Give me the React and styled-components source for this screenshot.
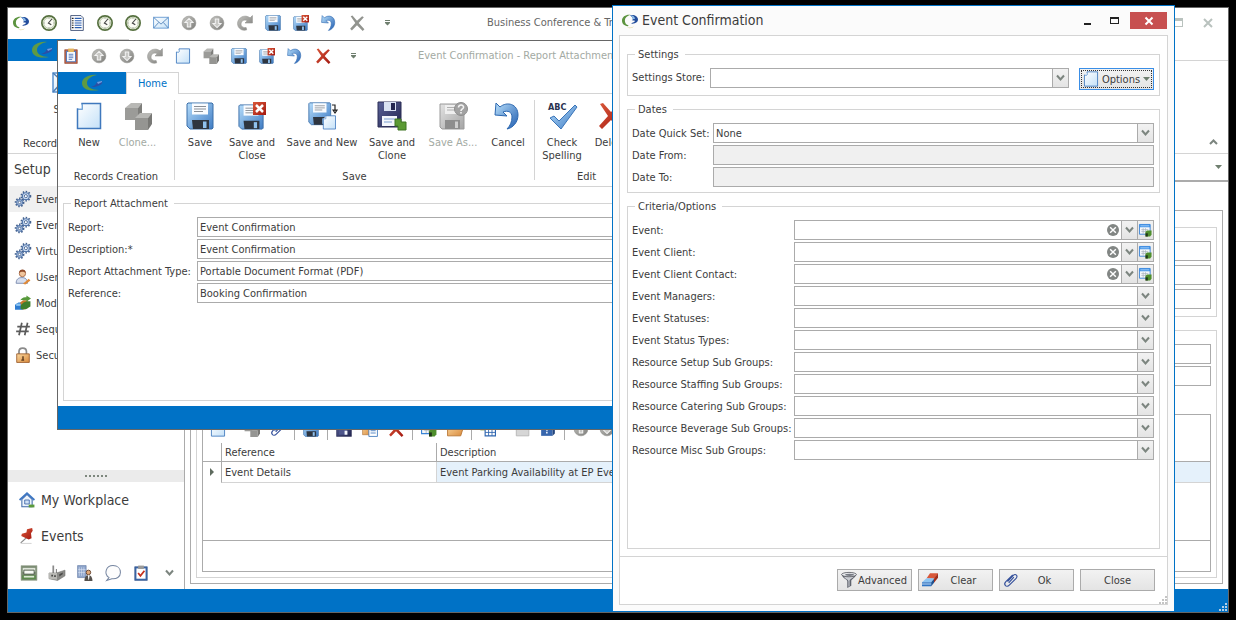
import React, { useId } from 'react';
import styled, { createGlobalStyle } from 'styled-components';

const blue = '#0072c6';
const line = '#d4d4d4';
const darkLine = '#ababab';

const GlobalStyle = createGlobalStyle`
  * {
    box-sizing: border-box;
  }

  body {
    margin: 0;
    background: #000;
    color: #3c3c3c;
    font-family: Tahoma, 'DejaVu Sans Condensed', 'Noto Sans', sans-serif;
    font-size: 11px;
    line-height: 13px;
  }

  button, input, select {
    font: inherit;
    color: inherit;
    margin: 0;
  }

  button {
    background: none;
    border: none;
    padding: 0;
  }

  svg {
    flex: none;
    overflow: visible;
  }
`;

/* ---------- windows ---------- */

const Desktop = styled.div`
  position: relative;
  min-height: 100vh;
  overflow: hidden;
`;

const Window = styled.section`
  position: absolute;
  display: flex;
  flex-direction: column;
  overflow: hidden;
  background: #fff;
  border: 1px solid #666;
`;

const MainWindow = styled(Window)`
  inset: 7px;
`;

const ReportWindow = styled(Window)`
  inset: 40px 200px 190px 57px;
`;

const DialogWindow = styled(Window)`
  inset: 5px 61px 8px 612px;
  background: #fbfbfb;
  border-color: ${blue};
  padding: 0 6px 6px;
`;

const TitleBar = styled.header`
  flex: none;
  display: flex;
  align-items: center;
  gap: 12px;
  height: 31px;
  padding: 0 11px 2px 5px;
  white-space: nowrap;
`;

const ToolButton = styled.button`
  flex: none;
  display: flex;
  align-items: center;
  justify-content: center;
  width: 16px;
  height: 16px;
`;

const MoreButton = styled(ToolButton)`
  width: 20px;
`;

const BarTitle = styled.h1`
  flex: 1;
  margin: 0;
  padding-left: ${(p) => p.$indent}px;
  overflow: hidden;
  color: ${(p) => (p.$inactive ? '#a3aaa3' : '#666')};
  font-size: 11px;
  font-weight: normal;
`;

const StatusBar = styled.footer`
  flex: none;
  display: flex;
  align-items: flex-end;
  justify-content: flex-end;
  height: 23px;
  padding: 1px;
  background: ${blue};
`;

/* ---------- ribbon ---------- */

const TabRow = styled.nav`
  flex: none;
  display: flex;
  height: 22px;
  border-bottom: 1px solid ${line};
`;

const AppButton = styled.button`
  display: flex;
  align-items: center;
  justify-content: center;
  width: 68px;
  height: 22px;
  background: ${blue};
`;

const Tab = styled.button`
  width: 53px;
  height: 22px;
  background: #fff;
  border: 1px solid ${line};
  border-bottom: none;
  color: ${blue};
`;

const Ribbon = styled.div`
  flex: none;
  display: flex;
  height: 93px;
  padding: 6px 0 3px;
  border-bottom: 1px solid ${line};
`;

const RibbonGroup = styled.div`
  display: flex;
  flex-direction: column;
  justify-content: space-between;
  padding: 0 ${(p) => p.$pad || 3}px;
  text-align: ${(p) => (p.$left ? 'left' : 'center')};
`;

const RibbonSeparator = styled.span`
  width: 1px;
  height: 80px;
  background: ${line};
`;

const RibbonItems = styled.div`
  display: flex;
  gap: 1px;
`;

const RibbonButton = styled.button`
  display: flex;
  flex-direction: column;
  align-items: center;
  gap: 6px;
  width: ${(p) => p.$width}px;
  padding: 2px 4px 0;
  white-space: ${(p) => (p.$wide ? 'nowrap' : 'normal')};

  &:disabled {
    color: #a3aaa3;
  }
`;

const RibbonSpacer = styled.div`
  flex: 1;
  display: flex;
  align-items: flex-end;
  justify-content: flex-end;
  padding-right: 7px;
`;

/* ---------- form parts ---------- */

const Group = styled.fieldset`
  min-width: 0;
  margin: 0;
  padding: 6px 5px 5px 4px;
  border: 1px solid ${line};
  flex: ${(p) => (p.$grow ? 1 : 'none')};

  legend {
    margin-left: 3px;
    padding: 0 6px 0 3px;
    line-height: 15px;
  }
`;

const Fields = styled.div`
  display: grid;
  grid-template-columns: ${(p) => p.$label}px 1fr;
  gap: 2px 0;
  align-items: center;
`;

const FieldLabel = styled.label`
  white-space: nowrap;
`;

const TextBox = styled.input`
  width: 100%;
  height: 20px;
  padding: 0 2px;
  background: #fff;
  border: 1px solid ${darkLine};
  border-radius: 0;
  outline: none;

  &:disabled {
    background: #f0f0f0;
  }
`;

const SelectWrap = styled.div`
  position: relative;
  height: 20px;

  select {
    display: block;
    width: 100%;
    height: 20px;
    padding: 0 18px 0 2px;
    appearance: none;
    background: #fff;
    border: 1px solid ${darkLine};
    border-radius: 0;
  }
`;

const SelectArrow = styled.span`
  position: absolute;
  top: 0;
  right: 0;
  display: flex;
  align-items: center;
  justify-content: center;
  width: 17px;
  height: 20px;
  background: linear-gradient(#f2f2f2, #e4e4e4);
  border: 1px solid ${darkLine};
  pointer-events: none;
`;

const LookupBox = styled.div`
  display: flex;
  align-items: center;
  height: 20px;
  background: #fff;
  border: 1px solid ${darkLine};

  input {
    flex: 1;
    min-width: 0;
    height: 18px;
    padding: 0 2px;
    border: none;
    background: none;
  }
`;

const LookupButton = styled.button`
  display: flex;
  align-items: center;
  justify-content: center;
  width: 16px;
  height: 18px;
  background: linear-gradient(#f2f2f2, #e4e4e4);
  border-left: 1px solid ${darkLine};
`;

const ClearButton = styled(ToolButton)`
  width: 17px;
`;

const PushButton = styled.button`
  display: flex;
  align-items: center;
  width: 75px;
  height: 22px;
  padding: 0 3px;
  background: linear-gradient(#f2f2f2, #e4e4e4);
  border: 1px solid ${darkLine};

  span {
    flex: 1;
    text-align: center;
  }
`;

const OptionsButton = styled(PushButton)`
  border-color: #3a8ee6;
  outline: 1px dotted #333;
  outline-offset: -3px;
`;

/* ---------- dialog ---------- */

const DialogBar = styled.header`
  flex: none;
  display: flex;
  align-items: center;
  gap: 4px;
  height: 29px;
  padding: 0 1px 0 3px;

  h2 {
    flex: 1;
    margin: 0;
    font-size: 14px;
    font-weight: normal;
  }
`;

const CaptionButton = styled.button`
  display: flex;
  align-items: center;
  justify-content: center;
  width: ${(p) => p.$width}px;
  height: 17px;
  background: ${(p) => (p.$close ? '#c75050' : 'none')};
`;

const DialogBody = styled.div`
  flex: 1;
  display: flex;
  flex-direction: column;
  background: #fff;
  border: 1px solid ${line};
`;

const DialogForm = styled.form`
  flex: 1;
  display: flex;
  flex-direction: column;
  gap: 6px;
  padding: 11px 7px 7px;
`;

const StoreRow = styled.div`
  display: grid;
  grid-template-columns: 78px 1fr 75px;
  align-items: start;
  height: 22px;

  label {
    line-height: 20px;
  }
`;

const StoreSelect = styled.div`
  padding-right: 10px;
`;

const DialogFooter = styled.footer`
  display: flex;
  justify-content: flex-end;
  gap: 6px;
  padding: 12px 12px 5px;
  border-top: 1px solid ${line};
`;

const GripRow = styled.div`
  display: flex;
  justify-content: flex-end;
`;

/* ---------- main window ---------- */

const MainBody = styled.div`
  flex: 1;
  display: flex;
  min-height: 0;
`;

const Sidebar = styled.aside`
  flex: none;
  display: flex;
  flex-direction: column;
  width: 177px;
  border-right: 1px solid ${darkLine};

  h2 {
    margin: 0;
    padding-left: 6px;
    font-size: 14px;
    font-weight: normal;
    line-height: 31px;
    height: 32px;
  }
`;

const NavList = styled.div`
  flex: 1;
  padding: 0 1px;
`;

const NavItem = styled.button`
  display: flex;
  align-items: center;
  gap: 5px;
  width: 100%;
  height: 26px;
  padding-left: 6px;
  background: ${(p) => (p.$active ? '#f0f0f0' : 'none')};
`;

const Splitter = styled.div`
  display: flex;
  align-items: center;
  justify-content: center;
  gap: 2px;
  height: 12px;
  background: #ebebeb;

  i {
    width: 2px;
    height: 2px;
    background: #7d877d;
  }
`;

const BigNavItem = styled.button`
  display: flex;
  align-items: center;
  gap: 6px;
  height: 36px;
  padding-left: 11px;
  font-size: 14px;
`;

const NavIcons = styled.div`
  display: flex;
  align-items: center;
  gap: 12px;
  height: 35px;
  padding: 3px 0 0 13px;
`;

const Content = styled.main`
  flex: 1;
  display: flex;
  flex-direction: column;
  min-width: 0;
`;

const DocTabs = styled.div`
  display: flex;
  align-items: center;
  justify-content: flex-end;
  height: 28px;
  padding: 0 6px 1px 0;
  border-bottom: 2px solid ${darkLine};
`;

const Record = styled.div`
  flex: 1;
  display: flex;
  flex-direction: column;
  margin: 28px 5px 5px;
  padding: 16px 5px 5px;
  border: 1px solid ${darkLine};
`;

const Panel = styled.div`
  display: flex;
  flex-direction: column;
  flex: ${(p) => (p.$grow ? 1 : 'none')};
  gap: ${(p) => p.$gap}px;
  padding: 13px 5px ${(p) => (p.$grow ? 5 : 7)}px;
  border: 1px solid ${line};

  & + & {
    margin-top: 13px;
  }
`;

const Grid = styled.div`
  flex: 1;
  display: flex;
  flex-direction: column;
  margin-top: 26px;
  border: 1px solid ${darkLine};
`;

const GridTools = styled.div`
  display: flex;
  align-items: center;
  gap: 10px;
  height: 28px;
  padding-left: 7px;
`;

const SplitButton = styled(ToolButton)`
  justify-content: flex-start;
  width: 24px;
`;

const GridSeparator = styled.span`
  width: 1px;
  height: 22px;
  margin: 0 -2px;
  background: ${darkLine};
`;

const Table = styled.table`
  width: 100%;
  table-layout: fixed;
  border-collapse: separate;
  border-spacing: 0;

  th, td {
    height: 21px;
    padding: 0 3px;
    border-bottom: 1px solid ${line};
    border-left: 1px solid ${line};
    font-weight: normal;
    text-align: left;
    white-space: nowrap;
    overflow: hidden;
  }

  th {
    height: 19px;
    border-color: ${darkLine};
  }

  th:first-child, td:first-child {
    width: 18px;
    border-left: none;
    padding: 0 0 0 7px;
  }

  td:first-child {
    border-bottom: none;
  }

  td:nth-child(2) {
    border-left-color: ${darkLine};
  }

  th:nth-child(2) {
    width: 215px;
  }

  td:nth-child(3) {
    background: #e5f1fb;
  }
`;

const GridBlank = styled.div`
  flex: 1;
  border-bottom: 1px solid ${darkLine};
`;

const GridFooter = styled.div`
  height: 30px;
`;

/* ---------- icons ---------- */

const HiddenSvg = styled.svg`
  position: absolute;
  width: 0;
  height: 0;
`;

function Gradient({ id, from, to }) {
  return (
    <linearGradient id={id} x1="0" y1="0" x2="1" y2="1">
      <stop offset="0" stopColor={from} />
      <stop offset="1" stopColor={to} />
    </linearGradient>
  );
}

function IconDefs() {
  return (
    <HiddenSvg aria-hidden="true">
      <defs>
        <Gradient id="gDisk" from="#b5dcfa" to="#3f7cc4" />
        <Gradient id="gNavy" from="#5a6299" to="#23264f" />
        <Gradient id="gPage" from="#ffffff" to="#c4e1f8" />
        <Gradient id="gRed" from="#d9583a" to="#a3170f" />
        <Gradient id="gGray" from="#c4c4c0" to="#7d7d7a" />
        <Gradient id="gUndo" from="#b9e0fb" to="#1f5cb0" />
        <Gradient id="gGold" from="#fbd9a0" to="#d98a3d" />
        <Gradient id="gSilver" from="#e2e2e2" to="#a5a5a5" />
      </defs>
    </HiddenSvg>
  );
}

const disk = (
  <>
    <path d="M2 1h24l1 1v24l-1 1H4l-3-3V2z" fill="url(#gDisk)" stroke="#3a6ea8" />
    <path d="M6 1.500h16v11H6z" fill="#fafcff" />
    <path d="M8 4.500h12M8 7h12M8 9.500h9" stroke="#8a8f96" />
    <path d="M6 18h17v9H7z" fill="#2e3540" />
    <path d="M17 19.500h3.500V26H17z" fill="#8fc1ee" />
  </>
);

const page = (
  <>
    <path d="M7 1.500h18.500v25h-23V7H7z" fill="url(#gPage)" stroke="#3f78bd" strokeWidth="1.500" />
    <path d="M7 2v5H3" fill="#fff" stroke="#7fb0e0" />
  </>
);

const cubes = (
  <>
    <path d="M1 6l6-5h11l-4 5z" fill="#b8b8b5" />
    <path d="M1 6h13v12H1z" fill="#9b9b98" />
    <path d="M14 6l4-5v10l-4 6z" fill="#7e7e7b" />
    <path d="M11 16l5-5h12l-4 5z" fill="#b8b8b5" />
    <path d="M11 16h13v12H11z" fill="#959592" />
    <path d="M24 16l4-5v11l-4 6z" fill="#787875" />
  </>
);

const undo = (
  <path
    d="M2 1L1 13l12 1-4-4c5-2 9 0 9 5 0 5-2 9-5 12 6-1 11-7 11-14C24 2 13-1 6 5z"
    fill="url(#gUndo)"
    stroke="#2d68b0"
  />
);

const roundArrow = (d) => (
  <>
    <circle cx="14" cy="14" r="12" fill="url(#gGray)" stroke="#8b8b88" />
    <path d={d} fill="#c9c9c6" stroke="#f4f4f4" strokeWidth="1.800" />
  </>
);

const clock = (
  <>
    <circle cx="14" cy="14" r="12.500" fill="#fbfcf5" stroke="#56703f" strokeWidth="3" />
    <circle cx="14" cy="14" r="9.500" fill="none" stroke="#a9ba94" strokeWidth="1.500" />
    <path d="M19 7l-6 7 5 3" fill="none" stroke="#444" strokeWidth="2" />
    <path d="M14 5v2M14 21v2M5 14h2M21 14h2" stroke="#888" />
  </>
);

const clip = (
  <path
    d="M8 17L18 6c4-4 9 1 5 5L11 23c-5 5-11-1-6-6L17 5M10 19l9-10"
    fill="none"
    stroke="#34509b"
    strokeWidth="2"
  />
);

const gear = (cx, cy, r) => (
  <>
    <circle cx={cx} cy={cy} r={r + 2} fill="none" stroke="#43618f" strokeWidth="3" strokeDasharray="2.600 2.600" />
    <circle cx={cx} cy={cy} r={r} fill="#cfdff5" stroke="#5578ab" strokeWidth="2" />
    <circle cx={cx} cy={cy} r={r / 2.2} fill="#fff" stroke="#43618f" strokeWidth="1.500" />
  </>
);

const cross = 'M3 2l3-1 8 9 9-8 3 2-9 10 10 11-3 3-10-10L5 27l-3-3 9-10z';

const icons = {
  disk,
  page,
  cubes,
  undo,
  clock,
  clip,
  logo: (
    <>
      <path d="M15 3C7 2 0 6 0 13c0 6 4 9 10 10 2 0 2-1 0-2-3-1-5-4-5-8 0-5 4-8 10-10z" fill="#5d9440" />
      <path d="M14 4c7-2 14 2 14 7 0 6-6 8-12 8l2-2c4-1 5-2 4-4h-4l1-3c-1-3-3-4-5-6z" fill="#234d9c" />
      <path d="M14 4c5 0 8 2 9 6l-4 1c0-3-2-5-5-7z" fill="#8fbde8" />
      <path d="M9 25c5 1 9 0 12-2-2 3-8 5-12 2z" fill="#e3d9a0" />
    </>
  ),
  report: (
    <>
      <path d="M3 1h18l4 4v22H3z" fill="#fff" stroke="#33466e" strokeWidth="1.500" />
      <path d="M10 6h12M10 10h12M10 14h12M10 18h12M10 22h12" stroke="#2a5db0" strokeWidth="2" />
      <path d="M5 6h3M5 10h3M5 14h3M5 18h3M5 22h3" stroke="#222" strokeWidth="2" />
    </>
  ),
  mail: (
    <>
      <path d="M1 4h26v19H1z" fill="url(#gPage)" stroke="#5b93cf" strokeWidth="1.500" />
      <path d="M1 4l13 12L27 4M1 23l9-10M27 23l-9-10" fill="none" stroke="#4d7fb8" strokeWidth="1.500" />
    </>
  ),
  up: roundArrow('M14 6l7 7h-4v8h-6v-8H7z'),
  down: roundArrow('M14 22l7-7h-4V7h-6v8H7z'),
  refresh: (
    <path
      d="M27 1v13H14l4-4c-5-3-11 0-11 6 0 4 4 7 9 6l1 4C9 29 1 23 1 15 1 4 14-2 23 5z"
      fill="url(#gGray)"
      stroke="#90908d"
    />
  ),
  diskClose: (
    <>
      <g transform="translate(0 2) scale(.93)">{disk}</g>
      <path d="M15 0h13v13H15z" fill="url(#gRed)" />
      <path d="M18 3l7 7M25 3l-7 7" stroke="#fff" strokeWidth="2.500" />
    </>
  ),
  diskNew: (
    <>
      <g transform="scale(.84)">{disk}</g>
      <g transform="translate(14 13) scale(.53)">{page}</g>
      <path d="M24 3h3v6M25 8l2 3 2-3z" fill="none" stroke="#222" strokeWidth="1.200" />
    </>
  ),
  diskNavy: (
    <>
      <path d="M1 1h26v26H1z" fill="url(#gNavy)" stroke="#2a2c55" />
      <path d="M8 1h12v9H8z" fill="#d9e2f2" />
      <path d="M15 2h4v7h-4z" fill="#23264f" />
      <path d="M5 14h14v10H5z" fill="#4e568c" />
      <path d="M15 17h5v7h-5z" fill="#f4f7fc" />
    </>
  ),
  diskClone: (
    <>
      <path d="M0 0h23v25H0z" fill="url(#gNavy)" stroke="#2a2c55" />
      <path d="M6 0h12v9H6z" fill="#d9e2f2" />
      <path d="M13 1h4v7h-4z" fill="#23264f" />
      <path d="M4 14h15v10H4z" fill="#f4f7fc" />
      <path d="M6 17h11M6 20h8" stroke="#7a9fd0" />
      <path d="M17 17h6v3h5v8h-8v-4h-3z" fill="#5b9a34" stroke="#3f7523" />
    </>
  ),
  diskAs: (
    <>
      <path d="M1 2h24v25H3l-2-2z" fill="url(#gSilver)" stroke="#9b9b9b" />
      <path d="M6 3h14v9H6z" fill="#efefef" />
      <path d="M8 5.500h10M8 8h10" stroke="#b0b0b0" />
      <path d="M6 18h15v9H6z" fill="#8e8e8e" />
      <path d="M16 19.500h3V26h-3z" fill="#cfcfcf" />
      <circle cx="22" cy="7" r="6.500" fill="#a2a2a2" stroke="#8d8d8d" />
      <path d="M19.500 5.500c0-3.500 5.500-3 5 0-.2 1.500-2.500 1.500-2.500 3.500M22 10v1.500" fill="none" stroke="#f4f4f4" strokeWidth="1.600" />
    </>
  ),
  spell: (
    <>
      <text x="0" y="8" fontSize="9" fontWeight="bold" fill="#2b3350">ABC</text>
      <path d="M2 16l4-2 5 5L27 3l2 2-16 22z" fill="url(#gDisk)" stroke="#3a74b8" />
    </>
  ),
  crossRed: <path d={cross} fill="url(#gRed)" />,
  crossGray: <path d={cross} fill="#92948f" />,
  clipboard: (
    <>
      <path d="M3 3h22v24H3z" fill="#c4633f" stroke="#8c3a26" />
      <path d="M6 6h16v18H6z" fill="#f6f9ff" stroke="#5a7cb8" strokeWidth="2" />
      <path d="M9 1h10v6H9z" fill="#e6b45a" />
      <path d="M10 11h8M10 14h8M10 17h8M10 20h6" stroke="#4b74ba" strokeWidth="1.500" />
    </>
  ),
  gears: (
    <>
      {gear(19, 9, 6)}
      {gear(8, 20, 5)}
    </>
  ),
  user: (
    <>
      <circle cx="13" cy="8" r="5.500" fill="#f0c59c" stroke="#a4623c" strokeWidth="1.500" />
      <path d="M7 7c0-8 12-8 12 0-3-3-9-3-12 0z" fill="#8f4a2a" />
      <path d="M2 25c0-7 4-10 10-10s10 3 10 10z" fill="#d6deee" stroke="#7183a8" strokeWidth="1.500" />
      <path d="M14 26l10-9 3 3-9 7z" fill="#e08a38" />
    </>
  ),
  modules: (
    <>
      <path d="M0 17l6-4h8v13H0z" fill="#2f7cd0" />
      <path d="M2 15h8v4H2z" fill="#8cc4f2" />
      <path d="M9 13l5-4h8v14l-8 3z" fill="#c87a2c" />
      <path d="M15 13l6-2h6v9l-8 5h-9v-7z" fill="#3f7f2c" />
      <path d="M9 9c4-5 8-5 11-5V1l8 5-8 6V9c-4 0-7-1-11 0z" fill="#579a3b" />
    </>
  ),
  hash: <path d="M12 3L7 25M22 3l-5 22M4 10h22M2 18h22" stroke="#5b5b5b" strokeWidth="3" />,
  lock: (
    <>
      <path d="M7 13V8c0-8 13-8 13 0v5" fill="none" stroke="#8a8a8a" strokeWidth="3" />
      <path d="M3 12h22v15H3z" fill="url(#gGold)" stroke="#9a5a28" strokeWidth="1.500" />
      <path d="M14 16v7M11 23h5" stroke="#5c3a1c" strokeWidth="2.500" />
    </>
  ),
  house: (
    <>
      <path d="M5 13l9-9 9 9v13H5z" fill="#eef4fc" stroke="#3f68a8" strokeWidth="1.800" />
      <path d="M1 14L14 2l13 12" fill="none" stroke="#3f78c4" strokeWidth="3" />
      <path d="M10 14h8v7h-8z" fill="#cfe0f5" stroke="#3f68a8" strokeWidth="1.500" />
      <path d="M17 22h10v5H17z" fill="#5b9a3c" />
    </>
  ),
  pin: (
    <>
      <path d="M13 17L3 26" stroke="#888" strokeWidth="2" />
      <path d="M14 2l9-2 1 5-3 4 1 9-5 2-13-6 1-4 8-2z" fill="url(#gRed)" />
      <path d="M3 27h19" stroke="#ccc" strokeWidth="1.500" />
    </>
  ),
  rack: (
    <>
      <path d="M0 1h28v26H0z" fill="#7c8c74" stroke="#a5b09e" />
      <path d="M3 5h22v7H3z" fill="#dfe5da" />
      <path d="M5 9h18v7H5z" fill="#f7f9f5" stroke="#44513f" strokeWidth="1.500" />
      <path d="M2 18h24v7H2z" fill="#5c8a4c" />
      <path d="M5 19h18v3H5z" fill="#dbe9d4" />
    </>
  ),
  factory: (
    <>
      <path d="M6 1h3v13H6zM12 7h2v8h-2z" fill="#8a8a8a" />
      <path d="M0 14h13l15-5v10l-13 8L0 24z" fill="#8b8b88" stroke="#6d6d6a" />
      <path d="M0 14h14v12L0 24z" fill="#b9b9b5" />
      <path d="M4 17h3v3H4zM9 18h3v3H9zM18 16l6-3v3l-6 4z" fill="#4a4a48" />
    </>
  ),
  building: (
    <>
      <path d="M1 1h15v21H1z" fill="#8fa5cc" stroke="#5a719f" />
      <path d="M4 4v15M8 4v15M12 4v15M2 8h13M2 13h13" stroke="#dde6f5" />
      <circle cx="20" cy="13" r="4" fill="#e2a878" stroke="#5b3823" strokeWidth="1.500" />
      <path d="M13 28c0-7 3-10 7-10s7 3 7 10z" fill="#55514d" />
      <path d="M19 18h3l-1 8h-1z" fill="#fff" />
    </>
  ),
  bubble: (
    <path d="M14 1c8 0 13 5 13 12 0 8-7 12-15 11l-9 3 4-5C-3 15 2 1 14 1z" fill="#fdfdfd" stroke="#7585a0" strokeWidth="1.800" />
  ),
  checklist: (
    <>
      <path d="M3 3h22v24H3z" fill="#3c67a8" stroke="#2c4f86" />
      <path d="M6 6h16v18H6z" fill="#fff" />
      <path d="M9 1h10v6H9z" fill="#9a9a9a" />
      <path d="M9 14l4 5 7-9" fill="none" stroke="#c5311d" strokeWidth="3" />
    </>
  ),
  copyPage: (
    <>
      <path d="M1 4h15v20H1z" fill="url(#gGold)" stroke="#a8692c" />
      <path d="M12 8h15v19H12z" fill="#fff" stroke="#3f78bd" strokeWidth="1.500" />
      <path d="M15 13h9M15 17h9M15 21h9" stroke="#3f78bd" strokeWidth="1.500" />
    </>
  ),
  lookup: (
    <>
      <path d="M1 1h23v21H1z" fill="#f4f7fb" stroke="#3a84d6" strokeWidth="2" />
      <path d="M1 1h23v6H1z" fill="#3a8fe6" />
      <path d="M3 3h19v2H3z" fill="#a9d2fa" />
      <path d="M5 12h15M5 16h12M9 9v12M14 9v12" stroke="#a9b3bd" strokeWidth="1.500" />
      <path d="M14 17l3-3h10v9l-3 4H14z" fill="#4f8f2d" />
      <path d="M14 20h5v7h-5z" fill="#22361a" />
    </>
  ),
  folder: <path d="M1 6h9l3 3h11v4h4l-4 13H1z" fill="url(#gGold)" stroke="#b5702c" strokeWidth="1.500" />,
  gridBlue: (
    <>
      <path d="M1 4h12v12H1z" fill="#e9f0cf" stroke="#8a9a55" />
      <path d="M9 8h18v18H9z" fill="#fff" stroke="#2f66b0" strokeWidth="2" />
      <path d="M9 14h18M9 20h18M15 8v18M21 8v18" stroke="#2f66b0" strokeWidth="1.500" />
    </>
  ),
  blank: <path d="M4 6h22v20H4z" fill="#d6d6d6" stroke="#b4b4b4" strokeWidth="1.500" />,
  help: (
    <>
      <path d="M2 5h20v21H2z" fill="#3766ad" />
      <path d="M22 5l4-3v20l-4 4z" fill="#24467d" />
      <path d="M8 11c1-4 8-3 7 1-1 2-3 2-3 5M12 19v3" fill="none" stroke="#fff" strokeWidth="2.500" />
    </>
  ),
  clear: (
    <>
      <circle cx="14" cy="14" r="10.500" fill="#828684" />
      <path d="M9 9l10 10M19 9L9 19" stroke="#fff" strokeWidth="2.500" />
    </>
  ),
  funnel: (
    <>
      <path d="M1 4c3 9 9 8 10 12v12l7-4v-8c0-4 6-4 9-12z" fill="#5e626c" />
      <path d="M5 8c3 5 7 5 8 8v10l2-1v-9c0-4 5-4 8-8z" fill="#c9ccd2" />
      <ellipse cx="14" cy="4.500" rx="13" ry="3.800" fill="#e9ebee" stroke="#5c5f66" strokeWidth="1.500" />
      <ellipse cx="15" cy="5" rx="8" ry="2" fill="#777b84" />
    </>
  ),
  eraser: (
    <>
      <path d="M8 11l6-9h14l-6 10z" fill="#d9583a" />
      <path d="M21 12l7-10v8l-7 9z" fill="#9e2f1c" />
      <path d="M0 18l8-7h13l-5 7z" fill="#8cc4f2" />
      <path d="M0 18h16v7H0z" fill="#2f74c4" />
      <path d="M16 18l5-6v7l-5 6z" fill="#1f5292" />
      <path d="M0 21h16" stroke="#dbeaf9" strokeWidth="1.500" />
    </>
  ),
};

function Icon({ name, size = 16 }) {
  return (
    <svg width={size} height={size} viewBox="0 0 28 28" aria-hidden="true">
      {icons[name]}
    </svg>
  );
}

const Chevron = ({ up }) => (
  <svg width="9" height="8" viewBox="0 0 9 8" aria-hidden="true">
    <path d={up ? 'M1 6l3.500-3.500L8 6' : 'M1 1.500L4.500 5.500 8 1.500'} fill="none" stroke="#7c857f" strokeWidth="2" />
  </svg>
);

const Triangle = () => (
  <svg width="7" height="4" viewBox="0 0 7 4" aria-hidden="true">
    <path d="M0 0h7L3.500 4z" fill="#6f7f6f" />
  </svg>
);

const MoreArrow = () => (
  <svg width="7" height="6" viewBox="0 0 7 6" aria-hidden="true">
    <path d="M1 0h5v1H1zM1 2h5v1L3.500 5.500 1 3z" fill="#6f7f6f" />
  </svg>
);

const AppLogo = () => (
  <svg width="24" height="18" viewBox="0 0 24 18" aria-hidden="true">
    <path d="M17 1C9 0 2 4 2 9c0 6 7 9 17 7C11 16 7 13 7 9c0-4 4-7 10-8z" fill="#5f9a45" />
    <path d="M11 13c4-1 5-3 6-5l5-1c1 2-1 4-4 5-2 1-5 1-7 1z" fill="#2b4fa5" />
    <path d="M17 8l5-1v1l-4 2z" fill="#6f9fe0" />
  </svg>
);

const Grip = ({ color }) => (
  <svg width="8" height="8" viewBox="0 0 8 8" aria-hidden="true">
    <path d="M6 0h2v2H6zM3 3h2v2H3zM6 3h2v2H6zM0 6h2v2H0zM3 6h2v2H3zM6 6h2v2H6z" fill={color} />
  </svg>
);

/* ---------- fields ---------- */

function TextField({ label, value, disabled }) {
  const id = useId();
  return (
    <>
      <FieldLabel htmlFor={id}>{label}</FieldLabel>
      <TextBox id={id} defaultValue={value} disabled={disabled} />
    </>
  );
}

function SelectControl({ id, value }) {
  return (
    <SelectWrap>
      <select id={id}>
        <option>{value}</option>
      </select>
      <SelectArrow>
        <Chevron />
      </SelectArrow>
    </SelectWrap>
  );
}

function SelectField({ label, value }) {
  const id = useId();
  return (
    <>
      <FieldLabel htmlFor={id}>{label}</FieldLabel>
      <SelectControl id={id} value={value} />
    </>
  );
}

function LookupField({ label }) {
  const id = useId();
  return (
    <>
      <FieldLabel htmlFor={id}>{label}</FieldLabel>
      <LookupBox>
        <input id={id} />
        <ClearButton type="button" aria-label="Clear value">
          <Icon name="clear" />
        </ClearButton>
        <LookupButton type="button" aria-label="Open list">
          <Chevron />
        </LookupButton>
        <LookupButton type="button" aria-label="Look up">
          <Icon name="lookup" size={13} />
        </LookupButton>
      </LookupBox>
    </>
  );
}

function QuickTools({ names }) {
  return names.map((name, i) => (
    <ToolButton key={i} aria-label={name}>
      <Icon name={name} />
    </ToolButton>
  ));
}

/* ---------- screens ---------- */

const mainTools = ['logo', 'clock', 'report', 'clock', 'clock', 'mail', 'up', 'down', 'refresh', 'disk', 'diskClose', 'undo', 'crossGray'];
const reportTools = ['clipboard', 'up', 'down', 'refresh', 'page', 'cubes', 'disk', 'diskClose', 'undo', 'crossRed'];

const navItems = [
  ['gears', 'Events'],
  ['gears', 'Event'],
  ['gears', 'Virtual'],
  ['user', 'Users'],
  ['modules', 'Modules'],
  ['hash', 'Sequences'],
  ['lock', 'Security'],
];

// the first button of a split group also carries a drop-down part
const gridTools = [
  { split: 'page', names: ['cubes', 'clip'] },
  { names: ['disk'] },
  { names: ['diskNavy', 'copyPage', 'crossRed'] },
  { names: ['lookup', 'folder'] },
  { split: 'gridBlue', names: ['blank', 'help'] },
  { names: ['up', 'down'] },
];

const ribbonGroups = [
  {
    title: 'Records Creation',
    pad: 10,
    items: [
      { icon: 'page', text: 'New', width: 42 },
      { icon: 'cubes', text: 'Clone...', width: 53, disabled: true },
    ],
  },
  {
    title: 'Save',
    items: [
      { icon: 'disk', text: 'Save', width: 44 },
      { icon: 'diskClose', text: 'Save and Close', width: 58 },
      { icon: 'diskNew', text: 'Save and New', width: 80, wide: true },
      { icon: 'diskClone', text: 'Save and Clone', width: 58 },
      { icon: 'diskAs', text: 'Save As...', width: 62, wide: true, disabled: true },
      { icon: 'undo', text: 'Cancel', width: 46 },
    ],
  },
  {
    title: 'Edit',
    items: [
      { icon: 'spell', text: 'Check Spelling', width: 48 },
      { icon: 'crossRed', text: 'Delete', width: 48 },
    ],
  },
];

const mainGroup = {
  title: 'Records',
  pad: 15,
  left: true,
  items: [{ icon: 'mail', text: 'Send', width: 86 }],
};

const selectCriteria = [
  'Event Managers:',
  'Event Statuses:',
  'Event Status Types:',
  'Resource Setup Sub Groups:',
  'Resource Staffing Sub Groups:',
  'Resource Catering Sub Groups:',
  'Resource Beverage Sub Groups:',
  'Resource Misc Sub Groups:',
];

function RibbonSection({ group }) {
  return (
    <>
      <RibbonGroup $pad={group.pad} $left={group.left}>
        <RibbonItems>
          {group.items.map((item) => (
            <RibbonButton key={item.text} $width={item.width} $wide={item.wide} disabled={item.disabled}>
              <Icon name={item.icon} size={28} />
              {item.text}
            </RibbonButton>
          ))}
        </RibbonItems>
        <div>{group.title}</div>
      </RibbonGroup>
      <RibbonSeparator />
    </>
  );
}

function Main() {
  return (
    <MainWindow>
      <TitleBar>
        <QuickTools names={mainTools} />
        <MoreButton aria-label="More">
          <MoreArrow />
        </MoreButton>
        <BarTitle $indent={78}>Business Conference &amp; Training</BarTitle>
        <CaptionButton $width={18} aria-label="Maximize">
          <svg width="10" height="9" viewBox="0 0 10 9">
            <path d="M0 0h10v9H0zM1 3v5h8V3z" fill="#b9c2be" fillRule="evenodd" />
          </svg>
        </CaptionButton>
        <CaptionButton $width={18} aria-label="Close">
          <svg width="10" height="10" viewBox="0 0 10 10">
            <path d="M1 1l8 8M9 1L1 9" stroke="#b9c2be" strokeWidth="2" />
          </svg>
        </CaptionButton>
      </TitleBar>
      <TabRow>
        <AppButton aria-label="Application menu">
          <AppLogo />
        </AppButton>
        <Tab>Home</Tab>
      </TabRow>
      <Ribbon>
        <RibbonSection group={mainGroup} />
        <RibbonSpacer>
          <ToolButton aria-label="Collapse ribbon">
            <Chevron up />
          </ToolButton>
        </RibbonSpacer>
      </Ribbon>
      <MainBody>
        <Sidebar>
          <h2>Setup</h2>
          <NavList>
            {navItems.map(([icon, text], i) => (
              <NavItem key={text} $active={i === 0}>
                <Icon name={icon} />
                {text}
              </NavItem>
            ))}
          </NavList>
          <Splitter>
            <i /><i /><i /><i /><i /><i />
          </Splitter>
          <BigNavItem>
            <Icon name="house" />
            My Workplace
          </BigNavItem>
          <BigNavItem>
            <Icon name="pin" />
            Events
          </BigNavItem>
          <NavIcons>
            <QuickTools names={['rack', 'factory', 'building', 'bubble', 'checklist']} />
            <ToolButton aria-label="Configure">
              <Chevron />
            </ToolButton>
          </NavIcons>
        </Sidebar>
        <Content>
          <DocTabs>
            <Triangle />
          </DocTabs>
          <Record>
            <Panel $gap={4}>
              <TextBox aria-label="Code" />
              <TextBox aria-label="Name" />
              <TextBox aria-label="Type" />
            </Panel>
            <Panel $gap={2} $grow>
              <TextBox aria-label="Subject" />
              <TextBox aria-label="Template" />
              <Grid>
                <GridTools>
                  {gridTools.map(({ split, names }, i) => (
                    <React.Fragment key={i}>
                      {i > 0 && <GridSeparator />}
                      {split && (
                        <SplitButton aria-label={split}>
                          <Icon name={split} />
                        </SplitButton>
                      )}
                      <QuickTools names={names} />
                    </React.Fragment>
                  ))}
                </GridTools>
                <Table>
                  <thead>
                    <tr>
                      <th />
                      <th>Reference</th>
                      <th>Description</th>
                    </tr>
                  </thead>
                  <tbody>
                    <tr>
                      <td>
                        <svg width="5" height="8" viewBox="0 0 5 8">
                          <path d="M0 0l4 4-4 4z" fill="#5f6b5f" />
                        </svg>
                      </td>
                      <td>Event Details</td>
                      <td>Event Parking Availability at EP Events</td>
                    </tr>
                  </tbody>
                </Table>
                <GridBlank />
                <GridFooter />
              </Grid>
            </Panel>
          </Record>
        </Content>
      </MainBody>
      <StatusBar>
        <Grip color="#b5cfe6" />
      </StatusBar>
    </MainWindow>
  );
}

const ReportBody = styled.div`
  flex: 1;
  display: flex;
  padding: 9px 5px 5px;

  ${Group} {
    flex: 1;
  }
`;

function ReportAttachment() {
  return (
    <ReportWindow>
      <TitleBar>
        <QuickTools names={reportTools} />
        <MoreButton aria-label="More">
          <MoreArrow />
        </MoreButton>
        <BarTitle $indent={43} $inactive>Event Confirmation - Report Attachment</BarTitle>
      </TitleBar>
      <TabRow>
        <AppButton aria-label="Application menu">
          <AppLogo />
        </AppButton>
        <Tab>Home</Tab>
      </TabRow>
      <Ribbon>
        {ribbonGroups.map((group) => (
          <RibbonSection key={group.title} group={group} />
        ))}
      </Ribbon>
      <ReportBody>
        <Group>
          <legend>Report Attachment</legend>
          <Fields $label={129}>
            <TextField label="Report:" value="Event Confirmation" />
            <TextField label="Description:*" value="Event Confirmation" />
            <TextField label="Report Attachment Type:" value="Portable Document Format (PDF)" />
            <TextField label="Reference:" value="Booking Confirmation" />
          </Fields>
        </Group>
      </ReportBody>
      <StatusBar />
    </ReportWindow>
  );
}

function EventConfirmation() {
  return (
    <DialogWindow>
      <DialogBar>
        <Icon name="logo" />
        <h2>Event Confirmation</h2>
        <CaptionButton $width={23} aria-label="Minimize">
          <svg width="8" height="8" viewBox="0 0 8 8">
            <path d="M0 6h7v2H0z" fill="#222" />
          </svg>
        </CaptionButton>
        <CaptionButton $width={23} aria-label="Maximize">
          <svg width="9" height="7" viewBox="0 0 9 7">
            <path d="M0 0h9v7H0zM1 2v4h7V2z" fill="#222" fillRule="evenodd" />
          </svg>
        </CaptionButton>
        <CaptionButton $width={37} $close aria-label="Close">
          <svg width="8" height="8" viewBox="0 0 8 8">
            <path d="M0.500 0.500l7 7M7.500 0.500l-7 7" stroke="#fff" strokeWidth="2" />
          </svg>
        </CaptionButton>
      </DialogBar>
      <DialogBody>
        <DialogForm>
          <Group>
            <legend>Settings</legend>
            <StoreRow>
              <FieldLabel htmlFor="store">Settings Store:</FieldLabel>
              <StoreSelect>
                <SelectControl id="store" value="" />
              </StoreSelect>
              <OptionsButton type="button">
                <Icon name="page" />
                <span>Options</span>
                <Triangle />
              </OptionsButton>
            </StoreRow>
          </Group>
          <Group>
            <legend>Dates</legend>
            <Fields $label={81}>
              <SelectField label="Date Quick Set:" value="None" />
              <TextField label="Date From:" disabled />
              <TextField label="Date To:" disabled />
            </Fields>
          </Group>
          <Group $grow>
            <legend>Criteria/Options</legend>
            <Fields $label={162}>
              <LookupField label="Event:" />
              <LookupField label="Event Client:" />
              <LookupField label="Event Client Contact:" />
              {selectCriteria.map((label) => (
                <SelectField key={label} label={label} value="" />
              ))}
            </Fields>
          </Group>
        </DialogForm>
        <DialogFooter>
          <PushButton><Icon name="funnel" /><span>Advanced</span></PushButton>
          <PushButton><Icon name="eraser" /><span>Clear</span></PushButton>
          <PushButton><Icon name="clip" /><span>Ok</span></PushButton>
          <PushButton><span>Close</span></PushButton>
        </DialogFooter>
        <GripRow>
          <Grip color="#c4c4c4" />
        </GripRow>
      </DialogBody>
    </DialogWindow>
  );
}

function App() {
  return (
    <>
      <GlobalStyle />
      <IconDefs />
      <Desktop>
        <Main />
        <ReportAttachment />
        <EventConfirmation />
      </Desktop>
    </>
  );
}

export default App;
